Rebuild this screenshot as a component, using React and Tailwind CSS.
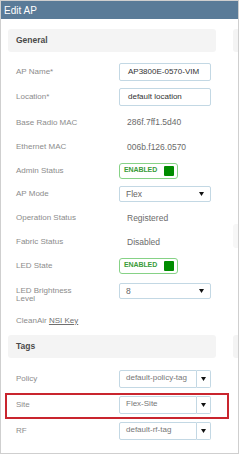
import React from "react";

const font = { fontFamily: '"Liberation Sans", Arial, sans-serif' };

function Arrow() {
  return (
    <svg width="5" height="4" viewBox="0 0 5 4" className="shrink-0">
      <path d="M0 0 L5 0 L2.5 4 Z" fill="#111" />
    </svg>
  );
}

function Label({ children }) {
  return <div className="w-[111px] shrink-0 pl-[8px] text-[8px] text-[#8c8c8c]">{children}</div>;
}

function Row({ h, label, children }) {
  return (
    <div className={`flex items-center ${h}`}>
      <Label>{label}</Label>
      {children}
    </div>
  );
}

function TextInput({ value }) {
  return (
    <div className="w-[92px] h-[18px] border border-[#c3d8e4] rounded-[2px] flex items-center pl-[8px] text-[8px] text-[#333]">
      {value}
    </div>
  );
}

function Static({ value }) {
  return <div className="pl-[8px] text-[8.5px] text-[#6b6b6b]">{value}</div>;
}

function Toggle() {
  return (
    <div className="w-[59px] h-[16px] border-[1.5px] border-[#86d286] rounded-[3px] flex items-center justify-between pl-[4px] pr-[3px]">
      <span className="text-[7px] font-bold text-[#3a9c3a] tracking-[-0.1px]">ENABLED</span>
      <span className="w-[10px] h-[10px] bg-[#008c00] rounded-[1px]"></span>
    </div>
  );
}

function Select({ value }) {
  return (
    <div className="w-[92px] h-[16px] border border-[#c3d8e4] rounded-[2px] flex items-center justify-between pl-[6px] pr-[6px] text-[8.5px] text-[#666]">
      <span>{value}</span>
      <Arrow />
    </div>
  );
}

function TagSelect({ value }) {
  return (
    <div className="flex h-[18px] w-[92px]">
      <div className="w-[78px] h-full border border-[#c3d8e4] rounded-l-[2px] pl-[6px] pt-[2px] text-[8px] text-[#777] leading-[10px]">
        {value}
      </div>
      <div className="w-[14px] h-full border border-l-0 border-[#c3d8e4] rounded-r-[2px] flex items-center justify-center">
        <Arrow />
      </div>
    </div>
  );
}

export default function App() {
  return (
    <div className="w-[240px] h-[456px] bg-white" style={font}>
      <div className="w-[239px] h-[454px] border border-[#cfcfcf] overflow-hidden flex flex-col">
        <div className="h-[18px] shrink-0 bg-[#5a7b98] text-white text-[10px] pl-[3px] flex items-center">
          Edit AP
        </div>
        <div className="flex pl-[7px] gap-[17px]">
          <div className="w-[208px] shrink-0 flex flex-col">
            <div className="mt-[10px] h-[23px] bg-[#f4f4f4] rounded-[3px] flex items-center pl-[8px] text-[8.5px] font-bold text-[#4a4a4a]">
              General
            </div>
            <div className="mt-[7px]" />
            <Row h="h-[25px]" label="AP Name*">
              <TextInput value="AP3800E-0570-VIM" />
            </Row>
            <Row h="h-[26px]" label="Location*">
              <TextInput value="default location" />
            </Row>
            <Row h="h-[25px]" label="Base Radio MAC">
              <Static value="286f.7ff1.5d40" />
            </Row>
            <Row h="h-[24px]" label="Ethernet MAC">
              <Static value="006b.f126.0570" />
            </Row>
            <Row h="h-[23px]" label="Admin Status">
              <Toggle />
            </Row>
            <Row h="h-[24px]" label="AP Mode">
              <Select value="Flex" />
            </Row>
            <Row h="h-[24px]" label="Operation Status">
              <Static value="Registered" />
            </Row>
            <Row h="h-[24px]" label="Fabric Status">
              <Static value="Disabled" />
            </Row>
            <Row h="h-[23px]" label="LED State">
              <Toggle />
            </Row>
            <div className="flex items-start h-[33px]">
              <div className="w-[111px] shrink-0 pl-[8px] pt-[10px] text-[8px] leading-[8px] text-[#8c8c8c]">
                LED Brightness
                <br />
                Level
              </div>
              <div className="pt-[6px]">
                <Select value="8" />
              </div>
            </div>
            <div className="flex items-center h-[22px] pl-[8px] text-[8px] text-[#8c8c8c]">
              CleanAir&nbsp;<span className="underline text-[#6f6f6f]">NSI Key</span>
            </div>
            <div className="mt-[3px] h-[23px] bg-[#f4f4f4] rounded-[3px] flex items-center pl-[8px] text-[8.5px] font-bold text-[#4a4a4a]">
              Tags
            </div>
            <div className="mt-[8px]" />
            <Row h="h-[26px]" label="Policy">
              <TagSelect value="default-policy-tag" />
            </Row>
            <div className="relative flex items-center h-[26px]">
              <div className="absolute left-[-3px] right-[-13px] top-[1px] bottom-[-1px] border-2 border-[#c9252e]" />
              <Label>Site</Label>
              <TagSelect value="Flex-Site" />
            </div>
            <Row h="h-[26px]" label="RF">
              <TagSelect value="default-rf-tag" />
            </Row>
          </div>
          <div className="w-[60px] shrink-0 flex flex-col">
            <div className="mt-[10px] h-[23px] bg-[#f4f4f4] rounded-[3px]" />
            <div className="mt-[172px] h-[24px] bg-[#f7f7f7] rounded-[3px]" />
            <div className="mt-[87px] h-[23px] bg-[#f4f4f4] rounded-[3px]" />
          </div>
        </div>
      </div>
    </div>
  );
}
